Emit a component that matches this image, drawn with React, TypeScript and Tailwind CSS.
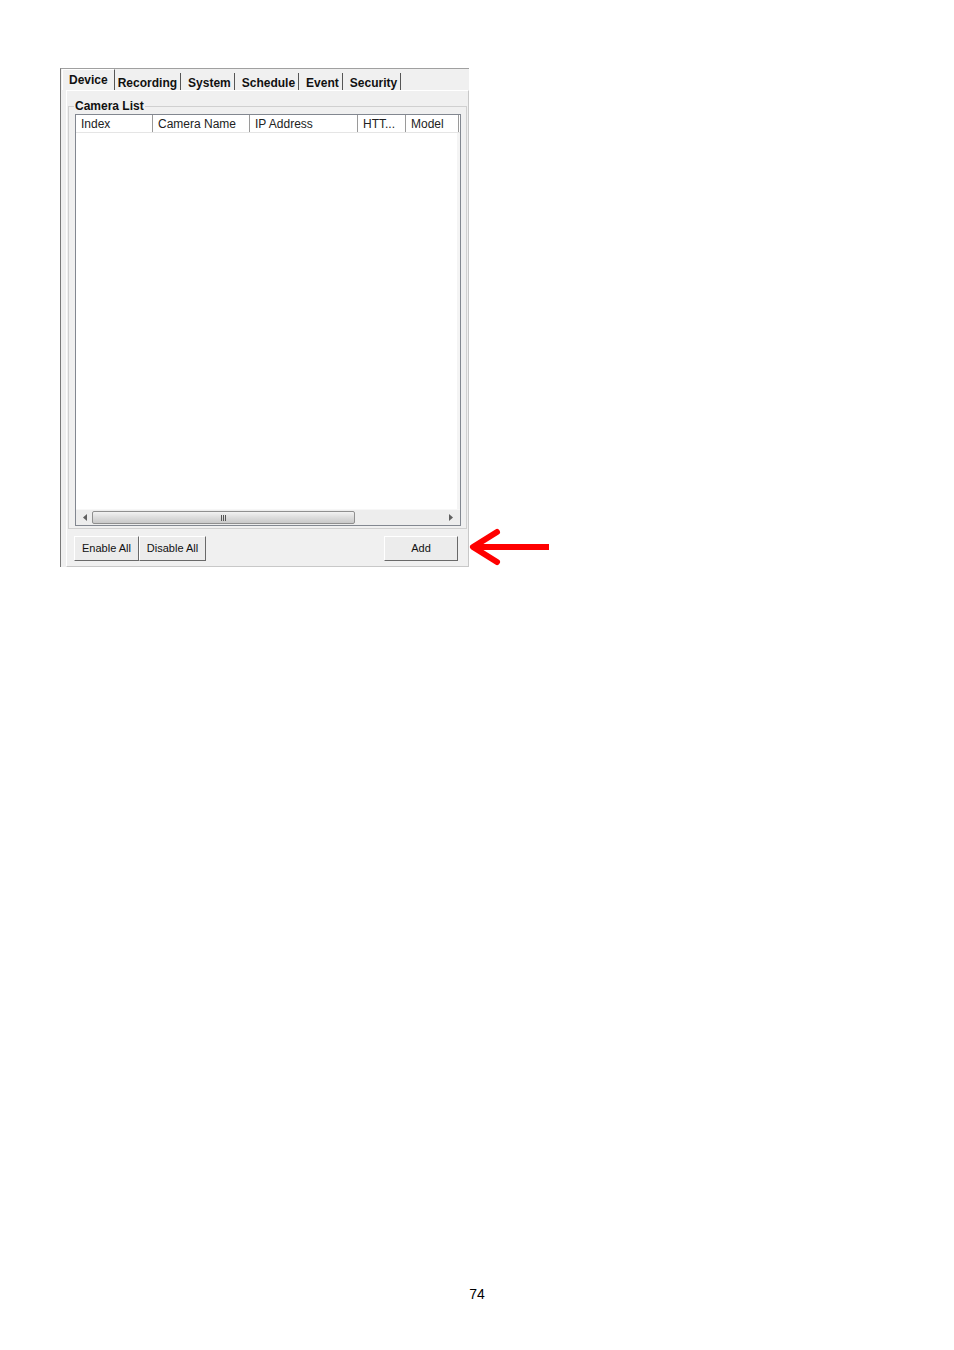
import React from 'react'

const tabs = ['Recording', 'System', 'Schedule', 'Event', 'Security']

const columns = [
  { label: 'Index', w: 'w-[77px]' },
  { label: 'Camera Name', w: 'w-[97px]' },
  { label: 'IP Address', w: 'w-[108px]' },
  { label: 'HTT...', w: 'w-[48px]' },
  { label: 'Model', w: 'w-[53px]' },
]

function WinButton({ label, className }: { label: string; className?: string }) {
  return (
    <div
      className={
        'h-[25px] flex items-center justify-center bg-[#ececec] border border-t-white border-l-white border-r-[#696969] border-b-[#696969] text-[11px] text-[#111] ' +
        (className || '')
      }
    >
      {label}
    </div>
  )
}

export default function App() {
  return (
    <div className="w-[954px] h-[1350px] bg-white overflow-hidden" style={{ fontFamily: '"Liberation Sans", Arial, sans-serif' }}>
      <div className="relative ml-[60px] mt-[68px] w-[409px] h-[499px] bg-[#f0f0f0] border-l border-t border-l-[#7a7a7a] border-t-[#a0a0a0]">
        {/* Tab strip */}
        <div className="flex items-end h-[21px] pl-[1px] text-[12px] font-bold text-[#111]">
          <div className="h-[21px] pl-[6px] pr-[6px] flex items-center border-t border-l border-r border-t-white border-l-white border-r-[#555] bg-[#f0f0f0]">
            Device
          </div>
          {tabs.map((t, i) => (
            <div
              key={t}
              className={
                'h-[17px] px-[3px] flex items-center border-r border-r-[#555] leading-none pt-[2px] ' +
                (i === 0 ? 'ml-0' : 'ml-[4px]')
              }
            >
              {t}
            </div>
          ))}
        </div>

        {/* Tab body */}
        <div className="ml-[5px] h-[477px] border-t border-l border-r border-b border-t-white border-l-white border-r-[#c8c8c8] border-b-[#c8c8c8] flex flex-col">
          <fieldset className="ml-[1px] mr-[1px] mt-[8px] border border-[#d0d0d0] pl-[6px] pr-[5px] pb-[2px]">
            <legend className="px-[1px] -ml-[1px] text-[12px] font-bold text-[#111] leading-[14px]">Camera List</legend>
            <div className="mt-[1px] h-[412px] w-[386px] border border-[#828790] bg-white flex flex-col">
              {/* header */}
              <div className="flex h-[18px] border-b border-[#e5e5e5] text-[12px] text-[#222]">
                {columns.map((c) => (
                  <div key={c.label} className={c.w + ' flex items-center pl-[5px] border-r border-[#9a9a9a] shrink-0'}>
                    {c.label}
                  </div>
                ))}
              </div>
              <div className="flex-1 border-r-[3px] border-[#f4f4f4]" />
              {/* horizontal scrollbar */}
              <div className="h-[16px] bg-[#ededed] border-t border-[#f7f7f7] flex items-center px-[3px]">
                <div className="w-[12px] flex justify-center">
                  <svg width="4" height="7" viewBox="0 0 4 7">
                    <path d="M4 0 L0 3.5 L4 7 Z" fill="#606060" />
                  </svg>
                </div>
                <div className="ml-[1px] w-[263px] h-[13px] rounded-[2px] border border-[#8f8f8f] bg-gradient-to-b from-[#f2f2f2] via-[#dcdcdc] to-[#c9c9c9] flex items-center justify-center">
                  <div className="flex gap-[1px]">
                    <div className="w-[1px] h-[6px] bg-[#555]" />
                    <div className="w-[1px] h-[6px] bg-[#555]" />
                    <div className="w-[1px] h-[6px] bg-[#555]" />
                  </div>
                </div>
                <div className="flex-1" />
                <div className="w-[12px] flex justify-center">
                  <svg width="4" height="7" viewBox="0 0 4 7">
                    <path d="M0 0 L4 3.5 L0 7 Z" fill="#606060" />
                  </svg>
                </div>
              </div>
            </div>
          </fieldset>

          {/* buttons */}
          <div className="mt-[7px] pl-[7px] pr-[10px] flex items-center">
            <WinButton label="Enable All" className="w-[65px]" />
            <WinButton label="Disable All" className="w-[67px]" />
            <div className="flex-1" />
            <WinButton label="Add" className="w-[74px]" />
          </div>
        </div>

        {/* red arrow annotation */}
        <svg className="absolute left-[406px] top-[458px]" width="84" height="42" viewBox="0 0 84 42">
          <path d="M6 20 L82 20" stroke="#ff0000" strokeWidth="6" />
          <path d="M30 5 L6 20 L30 35" stroke="#ff0000" strokeWidth="6" fill="none" strokeLinecap="round" strokeLinejoin="round" />
        </svg>
      </div>

      <div className="mt-[717px] text-center text-[14px] text-black">74</div>
    </div>
  )
}
